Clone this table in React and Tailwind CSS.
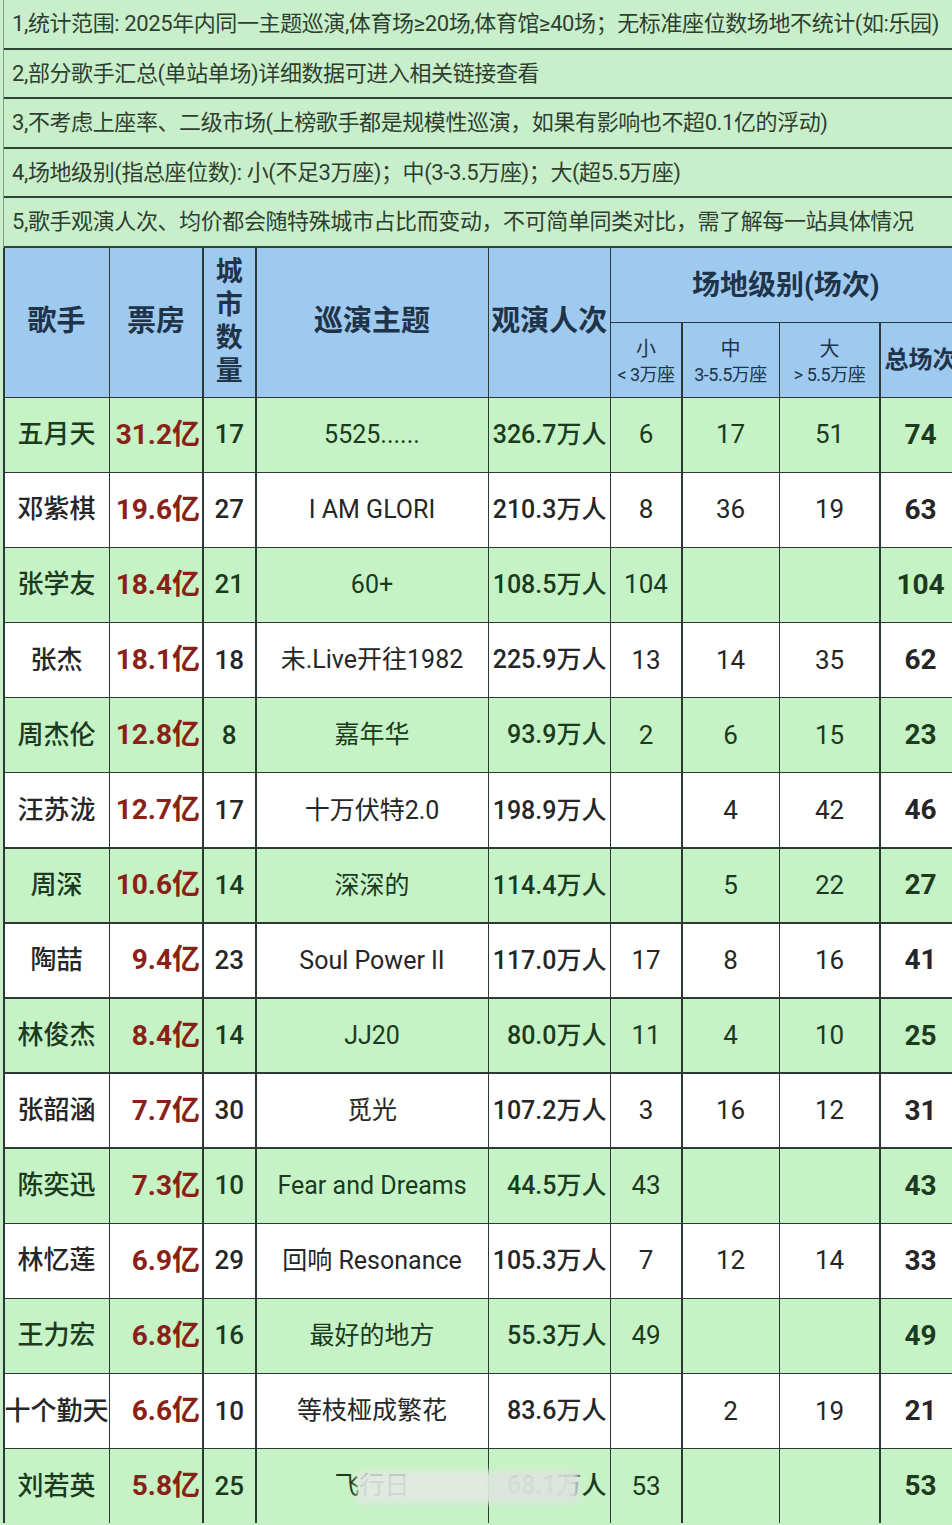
import React from 'react'

const notes = [
  '1,统计范围: 2025年内同一主题巡演,体育场≥20场,体育馆≥40场；无标准座位数场地不统计(如:乐园)',
  '2,部分歌手汇总(单站单场)详细数据可进入相关链接查看',
  '3,不考虑上座率、二级市场(上榜歌手都是规模性巡演，如果有影响也不超0.1亿的浮动)',
  '4,场地级别(指总座位数): 小(不足3万座)；中(3-3.5万座)；大(超5.5万座)',
  '5,歌手观演人次、均价都会随特殊城市占比而变动，不可简单同类对比，需了解每一站具体情况',
]

const rows = [
  ['五月天', '31.2亿', '17', '5525......', '326.7万人', '6', '17', '51', '74'],
  ['邓紫棋', '19.6亿', '27', 'I AM GLORI', '210.3万人', '8', '36', '19', '63'],
  ['张学友', '18.4亿', '21', '60+', '108.5万人', '104', '', '', '104'],
  ['张杰', '18.1亿', '18', '未.Live开往1982', '225.9万人', '13', '14', '35', '62'],
  ['周杰伦', '12.8亿', '8', '嘉年华', '93.9万人', '2', '6', '15', '23'],
  ['汪苏泷', '12.7亿', '17', '十万伏特2.0', '198.9万人', '', '4', '42', '46'],
  ['周深', '10.6亿', '14', '深深的', '114.4万人', '', '5', '22', '27'],
  ['陶喆', '9.4亿', '23', 'Soul Power II', '117.0万人', '17', '8', '16', '41'],
  ['林俊杰', '8.4亿', '14', 'JJ20', '80.0万人', '11', '4', '10', '25'],
  ['张韶涵', '7.7亿', '30', '觅光', '107.2万人', '3', '16', '12', '31'],
  ['陈奕迅', '7.3亿', '10', 'Fear and Dreams', '44.5万人', '43', '', '', '43'],
  ['林忆莲', '6.9亿', '29', '回响 Resonance', '105.3万人', '7', '12', '14', '33'],
  ['王力宏', '6.8亿', '16', '最好的地方', '55.3万人', '49', '', '', '49'],
  ['十个勤天', '6.6亿', '10', '等枝桠成繁花', '83.6万人', '', '2', '19', '21'],
  ['刘若英', '5.8亿', '25', '飞行日', '68.1万人', '53', '', '', '53'],
]

const font = { fontFamily: 'Roboto, "Noto Sans CJK SC", "Noto Sans", sans-serif' }

function Head({ children, className = '' }) {
  return (
    <div className={`bg-[#9ecaf0] text-[#1f3349] font-bold flex items-center justify-center ${className}`}>
      {children}
    </div>
  )
}

function SubHead({ top, bottom }) {
  return (
    <Head className="flex-col leading-[26px] font-normal pt-[4px]">
      <span className="text-[20px]">{top}</span>
      <span className="text-[18px] whitespace-nowrap tracking-[-0.5px]">{bottom}</span>
    </Head>
  )
}

export default function App() {
  return (
    <div className="w-[952px] h-[1525px] overflow-hidden bg-[#c9efca] pl-[3px]" style={font}>
      <div className="border-l-[1.5px] border-[#7f9f84]">
        {notes.map((n, i) => (
          <div
            key={i}
            className="h-[49.5px] border-b-2 border-[#2f4436] flex items-center pl-[8px] text-[22px] text-[#2e3f31] whitespace-nowrap overflow-hidden tracking-[-0.4px]"
          >
            {n}
          </div>
        ))}
      </div>

      <div className="grid w-max gap-[1.5px] bg-[#2c3934] pl-[1.5px] grid-cols-[104px_92px_51.5px_231px_120.5px_70px_96px_99px_80px] grid-rows-[74px_73.5px_repeat(15,73.6px)]">
        <Head className="row-span-2 text-[29px]">歌手</Head>
        <Head className="row-span-2 text-[29px]">票房</Head>
        <Head className="row-span-2 flex-col text-[27px] leading-[33px]">
          <span>城</span>
          <span>市</span>
          <span>数</span>
          <span>量</span>
        </Head>
        <Head className="row-span-2 text-[29px]">巡演主题</Head>
        <Head className="row-span-2 text-[29px] whitespace-nowrap">观演人次</Head>
        <Head className="col-span-4 text-[28px] pt-[2px]">场地级别(场次)</Head>
        <SubHead top="小" bottom="< 3万座" />
        <SubHead top="中" bottom="3-5.5万座" />
        <SubHead top="大" bottom="> 5.5万座" />
        <Head className="text-[24px] font-semibold whitespace-nowrap">总场次</Head>

        {rows.map((r, i) => {
          const green = i % 2 === 0
          const bg = green ? 'bg-[#c6f3c5]' : 'bg-white'
          const tx = green ? 'text-[#1b3a20]' : 'text-[#262626]'
          const cell = `${bg} ${tx} flex items-center whitespace-nowrap`
          const last = i === rows.length - 1
          return (
            <React.Fragment key={i}>
              <div className={`${cell} justify-center text-[26px] font-medium`}>{r[0]}</div>
              <div className={`${cell} justify-end pr-[2px] text-[28px] font-bold !text-[#8a2117]`}>{r[1]}</div>
              <div className={`${cell} justify-center text-[26px] font-medium`}>{r[2]}</div>
              <div className={`${cell} justify-center text-[25px] relative`}>
                {r[3]}
                {last && (
                  <div className="absolute left-[100px] top-[22px] w-[140px] h-[32px] bg-[#e4e8e4] blur-[3px] opacity-90" />
                )}
              </div>
              <div className={`${cell} justify-end pr-[3px] text-[25px] font-medium relative`}>
                {r[4]}
                {last && (
                  <div className="absolute left-0 top-[22px] w-[90px] h-[32px] bg-[#dfe4df] blur-[3px] opacity-95" />
                )}
              </div>
              <div className={`${cell} justify-center text-[26px]`}>{r[5]}</div>
              <div className={`${cell} justify-center text-[26px]`}>{r[6]}</div>
              <div className={`${cell} justify-center text-[26px]`}>{r[7]}</div>
              <div className={`${cell} justify-center text-[28px] font-bold`}>{r[8]}</div>
            </React.Fragment>
          )
        })}
      </div>
    </div>
  )
}
